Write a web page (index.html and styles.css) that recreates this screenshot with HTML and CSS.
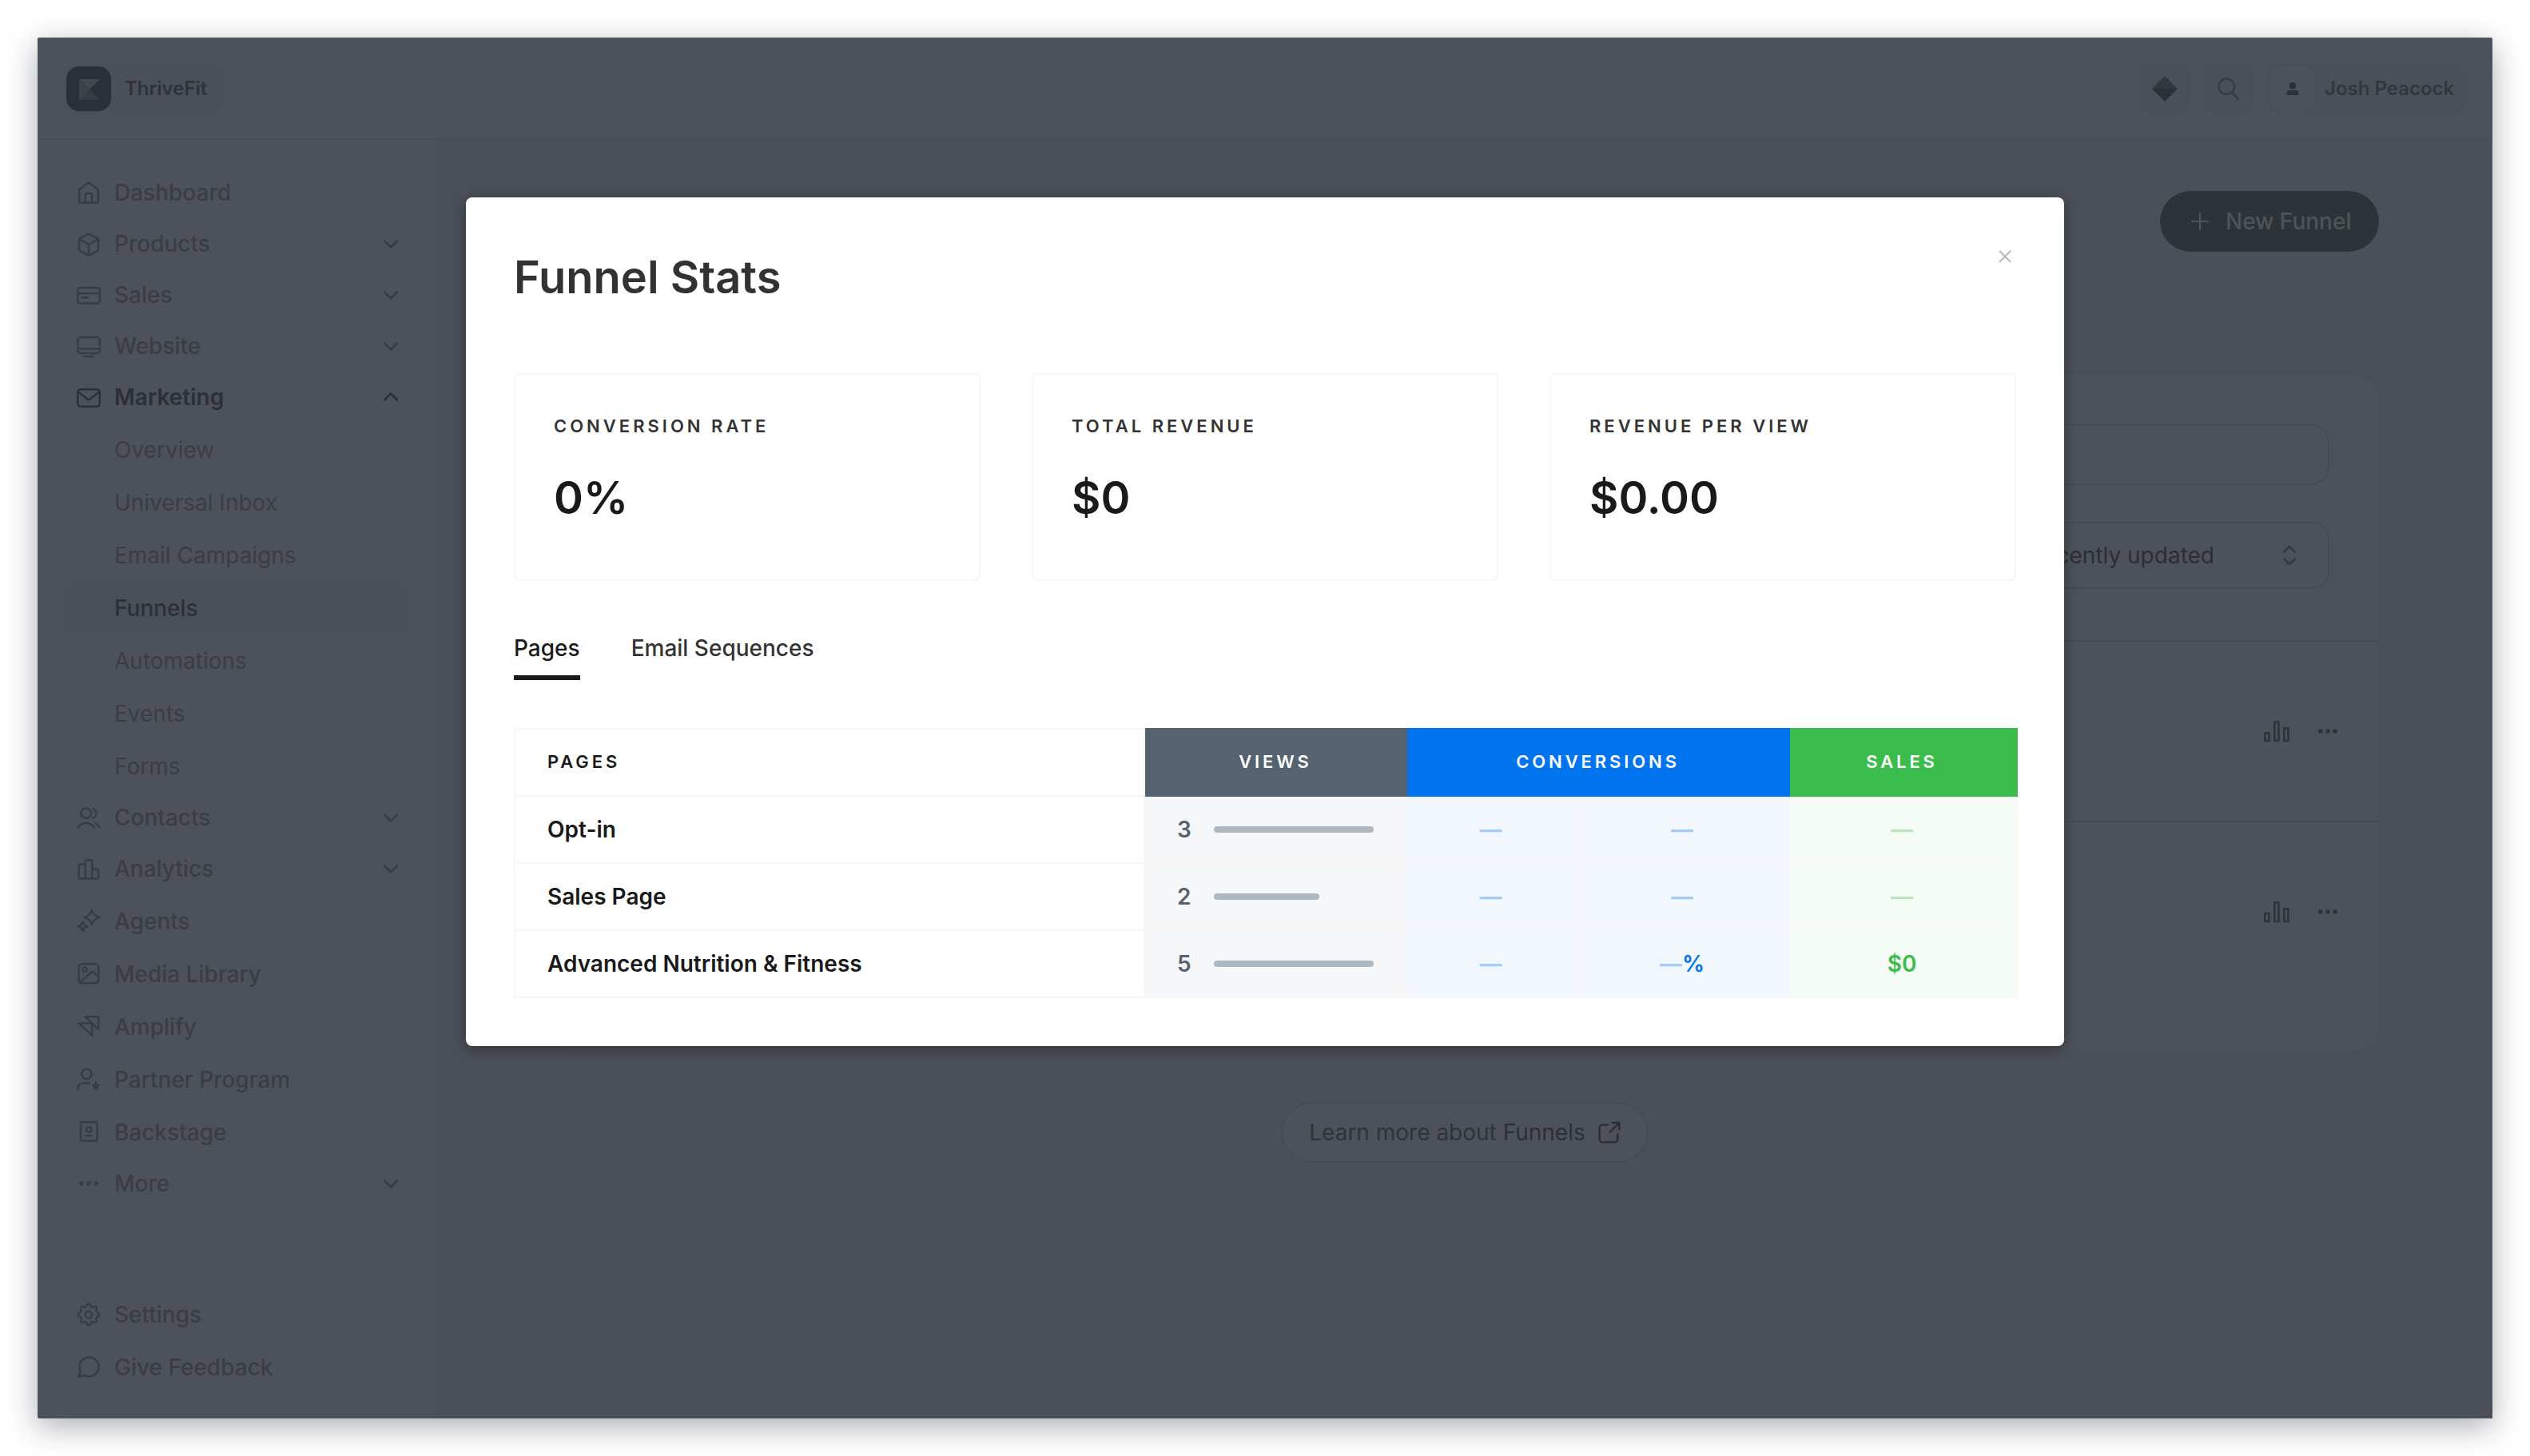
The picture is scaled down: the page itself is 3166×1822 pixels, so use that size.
FILE: index.html
```html
<!DOCTYPE html>
<html lang="en">
<head>
    <meta charset="UTF-8">
    <meta name="viewport" content="width=device-width, initial-scale=1.0">
    <title>Funnel Stats</title>
    <link rel="stylesheet" href="styles.css">
</head>
<body>
    <svg width="0" height="0" class="sprite">
        <symbol id="chevron" viewBox="0 0 32 32"><path d="M8 12.5l8 8 8-8"/></symbol>
        <symbol id="dots" viewBox="0 0 32 32"><g class="solid"><circle cx="6.8" cy="16" r="2.8"/><circle cx="16" cy="16" r="2.8"/><circle cx="25.2" cy="16" r="2.8"/></g></symbol>
        <symbol id="bars" viewBox="0 0 32 32"><path d="M1.3 18.3h5.2v9.6H1.3zM13.3 4.3h5.2v23.6h-5.2zM25.3 12.3h5.2v15.6h-5.2z"/></symbol>
    </svg>

    <div class="window">
        <header class="header">
            <div class="pill brand">
                <svg class="logo" viewBox="0 0 56 56">
                    <rect width="56" height="56" rx="16" fill="#2b2f37"/>
                    <path d="M16 16h26L29 29z" fill="#43484d"/>
                    <path d="M16 16l13 13-13 13z" fill="#3d4246"/>
                    <path d="M16 42l13-13 13 13z" fill="#373c40"/>
                </svg>
                <span>ThriveFit</span>
            </div>
            <div class="header-right">
                <div class="pill square">
                    <svg class="icon" viewBox="0 0 32 32">
                        <path d="M16 0L0 16h32z" fill="#33383e" stroke="none"/>
                        <path d="M0 16h32L16 32z" fill="#2b3034" stroke="none"/>
                    </svg>
                </div>
                <div class="pill square">
                    <svg class="icon" viewBox="0 0 32 32"><circle cx="13.4" cy="13.3" r="9.8"/><path d="M20 21l8 8"/></svg>
                </div>
                <div class="pill user">
                    <div class="avatar">
                        <svg width="16" height="16" viewBox="0 0 16 16" fill="#2b2f37"><circle cx="8" cy="4.2" r="4.2"/><path d="M.5 16v-2a4 4 0 0 1 4-4h7a4 4 0 0 1 4 4v2z"/></svg>
                    </div>
                    <span>Josh Peacock</span>
                </div>
            </div>
        </header>

        <div class="body">
            <nav class="sidebar">
                <div class="nav-item"><svg class="icon" viewBox="0 0 32 32"><path d="M4.2 13.2v13.6a2 2 0 0 0 2 2h19.6a2 2 0 0 0 2-2V13.2a2 2 0 0 0-.7-1.5L17.2 4.2a2 2 0 0 0-2.4 0l-9.9 7.5a2 2 0 0 0-.7 1.5z"/><path d="M11.8 28.8V18a1 1 0 0 1 1-1h6.4a1 1 0 0 1 1 1v10.8"/></svg><span>Dashboard</span></div>
                <div class="nav-item group"><svg class="icon" viewBox="0 0 32 32"><path d="M17 4.1l10 5.2a2 2 0 0 1 1 1.8v12a2 2 0 0 1-1 1.7l-10 5.5a2 2 0 0 1-2 0L5 24.8a2 2 0 0 1-1-1.7v-12a2 2 0 0 1 1-1.8l10-5.2a2 2 0 0 1 2 0zM4.5 10.5L16 17l11.5-6.5M16 17v13"/></svg><span>Products</span><svg class="icon"><use href="#chevron"/></svg></div>
                <div class="nav-item group"><svg class="icon" viewBox="0 0 32 32"><rect x="2.2" y="7" width="27.6" height="19.6" rx="3"/><path d="M2.2 14h27.6M7.5 19.4h7.5"/></svg><span>Sales</span><svg class="icon"><use href="#chevron"/></svg></div>
                <div class="nav-item group"><svg class="icon" viewBox="0 0 32 32"><rect x="2.2" y="5" width="27.6" height="20" rx="4"/><path d="M2.2 19.6h27.6M10.3 29h11.4"/></svg><span>Website</span><svg class="icon"><use href="#chevron"/></svg></div>
                <div class="nav-item group active"><svg class="icon" viewBox="0 0 32 32"><rect x="2.2" y="6.2" width="27.6" height="21.6" rx="4"/><path d="M3 9.5l11.3 9a2.8 2.8 0 0 0 3.4 0l11.3-9"/></svg><span>Marketing</span><svg class="icon flip"><use href="#chevron"/></svg></div>
                <div class="nav-item sub">Overview</div>
                <div class="nav-item sub">Universal Inbox</div>
                <div class="nav-item sub">Email Campaigns</div>
                <div class="nav-item sub current">Funnels</div>
                <div class="nav-item sub">Automations</div>
                <div class="nav-item sub">Events</div>
                <div class="nav-item sub">Forms</div>
                <div class="nav-item group"><svg class="icon" viewBox="0 0 32 32"><circle cx="12.7" cy="10.7" r="6.3"/><path d="M2.5 28.2a12.6 12.6 0 0 1 20.4 0M21.2 4.8a6.3 6.3 0 0 1 0 11.8M24.4 23.4a13 13 0 0 1 5.2 4.8"/></svg><span>Contacts</span><svg class="icon"><use href="#chevron"/></svg></div>
                <div class="nav-item group"><svg class="icon" viewBox="0 0 32 32"><path d="M11.8 28.6H4.7a1 1 0 0 1-1-1V11.7a1 1 0 0 1 1-1h7.1M11.8 28.6V6.2a1 1 0 0 1 1-1h6.6a1 1 0 0 1 1 1v22.4zM20.4 16.6h6.8a1 1 0 0 1 1 1v10a1 1 0 0 1-1 1h-6.8"/></svg><span>Analytics</span><svg class="icon"><use href="#chevron"/></svg></div>
                <div class="nav-item"><svg class="icon" viewBox="0 0 32 32"><path d="M20 1.8q1.8 7.2 9.6 9.2-7.8 2-9.6 9.2-1.8-7.2-9.6-9.2 7.8-2 9.6-9.2zM8.6 16.5q1.2 4.6 6 5.8-4.8 1.2-6 5.8-1.2-4.6-6-5.8 4.8-1.2 6-5.8z"/></svg><span>Agents</span></div>
                <div class="nav-item"><svg class="icon" viewBox="0 0 32 32"><rect x="3.7" y="3.2" width="24.6" height="24" rx="4"/><circle cx="11" cy="10.3" r="2.6"/><path d="M5.4 26L20 13.3a1.5 1.5 0 0 1 2 0l6 6"/></svg><span>Media Library</span></div>
                <div class="nav-item"><svg class="icon" viewBox="0 0 32 32"><path d="M11.6 3.2h16.6v15.6zM3.6 11.4h16.6v15.4z"/></svg><span>Amplify</span></div>
                <div class="nav-item"><svg class="icon" viewBox="0 0 32 32"><circle cx="13.4" cy="9" r="6.2"/><path d="M2.4 27.4v-1a6 6 0 0 1 6-6h8"/><path class="star" d="M25 18.8l1.5 3.1 3.4.5-2.5 2.4.6 3.4-3-1.6-3 1.6.6-3.4-2.5-2.4 3.4-.5z"/></svg><span>Partner Program</span></div>
                <div class="nav-item"><svg class="icon" viewBox="0 0 32 32"><rect x="6" y="3.2" width="20.6" height="23.4" rx="1"/><circle cx="16.2" cy="12.6" r="3.2"/><path d="M13 20.3h6.4"/></svg><span>Backstage</span></div>
                <div class="nav-item group"><svg class="icon"><use href="#dots"/></svg><span>More</span><svg class="icon"><use href="#chevron"/></svg></div>
                <div class="nav-item bottom"><svg class="icon" viewBox="0 0 32 32"><circle cx="16" cy="16" r="4.2"/><path d="M27.78 13.71A2.5 2.5 0 0 1 27.78 18.29A2.7 2.7 0 0 0 25.95 22.71A2.5 2.5 0 0 1 22.71 25.95A2.7 2.7 0 0 0 18.29 27.78A2.5 2.5 0 0 1 13.71 27.78A2.7 2.7 0 0 0 9.29 25.95A2.5 2.5 0 0 1 6.05 22.71A2.7 2.7 0 0 0 4.22 18.29A2.5 2.5 0 0 1 4.22 13.71A2.7 2.7 0 0 0 6.05 9.29A2.5 2.5 0 0 1 9.29 6.05A2.7 2.7 0 0 0 13.71 4.22A2.5 2.5 0 0 1 18.29 4.22A2.7 2.7 0 0 0 22.71 6.05A2.5 2.5 0 0 1 25.95 9.29A2.7 2.7 0 0 0 27.78 13.71z"/></svg><span>Settings</span></div>
                <div class="nav-item"><svg class="icon" viewBox="0 0 32 32"><path d="M16.6 3.4a12 12 0 1 1-5.2 22.8L4 27.4a.5.5 0 0 1-.5-.7L6 21.4A12 12 0 0 1 16.6 3.4z"/></svg><span>Give Feedback</span></div>
            </nav>

            <main class="main">
                <div class="page-head">
                    <button class="new-funnel"><svg width="22" height="22" viewBox="0 0 22 22"><path d="M11 1v20M1 11h20"/></svg>New Funnel</button>
                </div>
                <section class="card">
                    <div class="filters">
                        <div class="search"></div>
                        <div class="select"><span>Recently updated</span><svg width="16" height="26" viewBox="0 0 16 26"><path d="M1.2 8.6L8 1.8l6.8 6.8M1.2 17.4L8 24.2l6.8-6.8"/></svg></div>
                    </div>
                    <div class="funnel-row"><svg class="icon"><use href="#bars"/></svg><svg class="icon"><use href="#dots"/></svg></div>
                    <div class="funnel-row"><svg class="icon"><use href="#bars"/></svg><svg class="icon"><use href="#dots"/></svg></div>
                </section>
                <div class="learn-more">
                    <span>Learn more about <b>Funnels</b></span>
                    <svg width="28" height="28" viewBox="0 0 28 28"><path d="M12 4.6H5.6a4 4 0 0 0-4 4v13.8a4 4 0 0 0 4 4h14.8a4 4 0 0 0 4-4V16M14.8 13.4L26 2.4M17.6 2h8.8v8.8"/></svg>
                </div>
            </main>
        </div>
    </div>

    <div class="modal">
        <div class="modal-head">
            <h2>Funnel Stats</h2>
            <svg class="close" width="16" height="16" viewBox="0 0 16 16"><path d="M1 1l14 14M15 1L1 15"/></svg>
        </div>
        <div class="stats">
            <div class="stat"><div class="label">Conversion rate</div><div class="value">0%</div></div>
            <div class="stat"><div class="label">Total revenue</div><div class="value">$0</div></div>
            <div class="stat"><div class="label">Revenue per view</div><div class="value">$0.00</div></div>
        </div>
        <div class="tabs">
            <div class="tab selected">Pages</div>
            <div class="tab">Email Sequences</div>
        </div>
        <table class="pages">
            <colgroup><col class="c1"><col class="c2"><col class="c3"><col class="c4"><col class="c5"></colgroup>
            <tr>
                <th>Pages</th>
                <th class="th-views">Views</th>
                <th class="th-conv" colspan="2">Conversions</th>
                <th class="th-sales">Sales</th>
            </tr>
            <tr>
                <td>Opt-in</td>
                <td class="views"><div class="meter">3<span class="track"><i style="width: 100%"></i></span></div></td>
                <td class="conv"><span class="dash">—</span></td>
                <td class="conv"><span class="dash">—</span></td>
                <td class="sales"><span class="dash">—</span></td>
            </tr>
            <tr>
                <td>Sales Page</td>
                <td class="views"><div class="meter">2<span class="track"><i style="width: 66%"></i></span></div></td>
                <td class="conv"><span class="dash">—</span></td>
                <td class="conv"><span class="dash">—</span></td>
                <td class="sales"><span class="dash">—</span></td>
            </tr>
            <tr>
                <td>Advanced Nutrition &amp; Fitness</td>
                <td class="views"><div class="meter">5<span class="track"><i style="width: 100%"></i></span></div></td>
                <td class="conv"><span class="dash">—</span></td>
                <td class="conv"><span class="dash">—</span>%</td>
                <td class="sales">$0</td>
            </tr>
        </table>
    </div>
</body>
</html>
```
FILE: styles.css
```css
* {
    box-sizing: border-box;
}
body {
    margin: 0;
    padding: 47px;
    height: 1822px;
    overflow: hidden;
    background: #fff;
    font-family: Inter, "Liberation Sans", sans-serif;
    font-size: 28px;
    position: relative;
}
.sprite {
    position: absolute;
}
.window {
    width: 3072px;
    height: 1728px;
    background: #4d5159;
    border-radius: 2px;
    box-shadow: 0 10px 38px rgba(20, 24, 40, 0.36);
    display: flex;
    flex-direction: column;
    color: #3a3e43;
}
.icon {
    width: 32px;
    height: 32px;
    flex: none;
    fill: none;
    stroke: #383c45;
    stroke-width: 2.5;
    stroke-linecap: round;
    stroke-linejoin: round;
}
.solid {
    fill: currentColor;
    stroke: none;
}
.star {
    fill: #383c45;
    stroke-width: 1;
}

/* header */
.header {
    height: 128px;
    padding: 32px 32px 30px;
    border-bottom: 2px solid #494d55;
    display: flex;
    justify-content: space-between;
}
.header-right {
    display: flex;
    gap: 16px;
}
.pill {
    height: 64px;
    border-radius: 18px;
    background: #4b4f57;
    display: flex;
    align-items: center;
    font-size: 24px;
    font-weight: 600;
    padding: 4px;
    color: #2e3339;
}
.pill span {
    padding-bottom: 2px;
}
.square {
    width: 64px;
    padding: 0;
    justify-content: center;
}
.brand {
    width: 200px;
    gap: 17px;
}
.logo {
    width: 56px;
    height: 56px;
}
.user {
    width: 250px;
    gap: 12px;
    color: #32373c;
}
.avatar {
    width: 56px;
    height: 56px;
    border-radius: 16px;
    background: #4d5159;
    display: flex;
    align-items: center;
    justify-content: center;
}

/* sidebar */
.body {
    flex: 1;
    min-height: 0;
    display: flex;
}
.sidebar {
    width: 500px;
    padding: 33px 32px 31px;
    border-right: 2px solid #4a4e56;
    display: flex;
    flex-direction: column;
}
.nav-item {
    height: 66px;
    flex: none;
    padding: 0 8px 0 16px;
    display: flex;
    align-items: center;
    gap: 16px;
    font-weight: 500;
}
.nav-item span {
    flex: 1;
}
.nav-item.group {
    margin-top: -2px;
}
.nav-item.sub {
    padding-left: 64px;
    font-weight: 400;
}
.nav-item.active {
    font-weight: 600;
    color: #2b2f36;
}
.nav-item.active .icon {
    stroke: #2b2f36;
}
.nav-item.current {
    font-weight: 500;
    color: #2b2f36;
    background: #4b4f57;
    border-radius: 18px;
}
.nav-item.bottom {
    margin-top: auto;
}
.flip {
    transform: rotate(180deg);
}

/* page behind the dialog */
.main {
    flex: 1;
    background: #4b4f57;
    padding: 64px 140px 0;
    display: flex;
    flex-direction: column;
}
.page-head {
    display: flex;
    justify-content: flex-end;
    padding-right: 2px;
    margin-bottom: 152px;
}
.new-funnel {
    width: 274px;
    height: 76px;
    border: 0;
    border-radius: 38px;
    background: #2e3337;
    color: #4f5459;
    font: 500 28px Inter, sans-serif;
    padding: 0 0 0 39px;
    display: flex;
    align-items: center;
    gap: 21px;
}
.new-funnel svg {
    stroke: #4f5459;
    stroke-width: 2.2;
    stroke-linecap: round;
}
.card {
    height: 850px;
    border: 2px solid #4a4e56;
    border-radius: 34px;
    background: #4d5159;
}
.filters {
    height: 334px;
    padding: 62px 62px 0;
    border-bottom: 2px solid #464a52;
    display: flex;
    flex-direction: column;
    align-items: flex-end;
    gap: 46px;
}
.search {
    width: 100%;
    height: 76px;
    border: 2px solid #474b53;
    border-radius: 22px;
}
.select {
    width: 420px;
    height: 84px;
    border: 2px solid #474b53;
    border-radius: 20px;
    padding-right: 40px;
    display: flex;
    align-items: center;
    justify-content: flex-end;
    gap: 86px;
    color: #2b2f33;
    white-space: nowrap;
}
.select svg {
    fill: none;
    stroke: #33373f;
    stroke-width: 2.4;
    stroke-linecap: round;
    stroke-linejoin: round;
}
.funnel-row {
    height: 226px;
    padding: 0 48px;
    border-bottom: 2px solid #464a52;
    display: flex;
    align-items: center;
    justify-content: flex-end;
    gap: 32px;
    color: #2e3337;
}
.funnel-row:last-child {
    border-bottom: 0;
    height: 224px;
}
.funnel-row .icon {
    stroke: #2e3337;
}
.learn-more {
    align-self: center;
    width: 460px;
    height: 76px;
    margin-top: 62px;
    border: 2px solid #474b53;
    border-radius: 38px;
    background: #4d5159;
    display: flex;
    align-items: center;
    justify-content: center;
    gap: 16px;
    color: #2f3438;
    white-space: nowrap;
}
.learn-more b {
    font-weight: 400;
    color: #2b2f36;
}
.learn-more svg {
    fill: none;
    stroke: #2b2f33;
    stroke-width: 2.4;
    stroke-linecap: round;
    stroke-linejoin: round;
}

/* dialog */
.modal {
    position: absolute;
    left: 583px;
    top: 247px;
    width: 2000px;
    height: 1062px;
    padding: 60px;
    background: #fff;
    border-radius: 8px;
    box-shadow: 0 4px 18px rgba(0, 0, 0, 0.35);
}
.modal-head {
    height: 160px;
    display: flex;
    justify-content: space-between;
}
.modal h2 {
    margin: 6px 0 0;
    font-size: 56px;
    line-height: 68px;
    font-weight: 600;
    color: #333230;
}
.close {
    margin: 6px 6px 0 0;
    stroke: #b5b5b5;
    stroke-width: 1.8;
}
.stats {
    display: grid;
    grid-template-columns: repeat(3, 1fr);
    gap: 64px;
}
.stat {
    height: 260px;
    padding: 48px;
    border: 2px solid #f7f7f8;
    border-radius: 8px;
}
.label {
    font-size: 22px;
    line-height: 32px;
    font-weight: 600;
    letter-spacing: 4px;
    text-transform: uppercase;
    color: #333;
}
.value {
    margin-top: 40px;
    font-size: 56px;
    line-height: 68px;
    font-weight: 600;
    color: #1a1a1a;
}
.tabs {
    margin-top: 64px;
    display: flex;
    gap: 64px;
}
.tab {
    height: 60px;
    line-height: 40px;
    font-weight: 500;
    color: #333;
}
.tab.selected {
    color: #1a1a1a;
    border-bottom: 6px solid #1a1a1a;
}
.pages {
    margin-top: 60px;
    width: 1880px;
    table-layout: fixed;
    border-collapse: collapse;
}
.c1 { width: 788px; }
.c2 { width: 328px; }
.c3 { width: 211px; }
.c4 { width: 268px; }
.c5 { width: 285px; }
.pages th,
.pages td {
    height: 84px;
    padding: 0 40px;
    border: 2px solid #f7f7f8;
    text-align: left;
    font-weight: 600;
    color: #1a1a1a;
}
.pages th {
    padding-bottom: 2px;
    font-size: 22px;
    letter-spacing: 3.9px;
    text-transform: uppercase;
}
.pages .th-views,
.pages .th-conv,
.pages .th-sales {
    text-align: center;
    color: #fff;
}
.pages .th-views {
    background: #55626f;
    border-color: #55626f;
}
.pages .th-conv {
    background: #0073ef;
    border-color: #0073ef;
}
.pages .th-sales {
    background: #3bbd4e;
    border-color: #3bbd4e;
    padding-right: 43px;
}
.pages .views {
    background: #f5f7f9;
    color: #55626f;
}
.pages .conv {
    background: #f2f7fe;
    color: #0073ef;
    text-align: center;
}
.pages .sales {
    background: #f5fcf5;
    color: #3bbd4e;
    text-align: center;
    padding-right: 43px;
}
.meter {
    display: flex;
    align-items: center;
    justify-content: space-between;
}
.track {
    width: 200px;
    height: 8px;
    display: flex;
}
.track i {
    background: #aeb8c1;
    border-radius: 4px;
}
.dash {
    font-weight: 700;
    opacity: 0.32;
}
```
